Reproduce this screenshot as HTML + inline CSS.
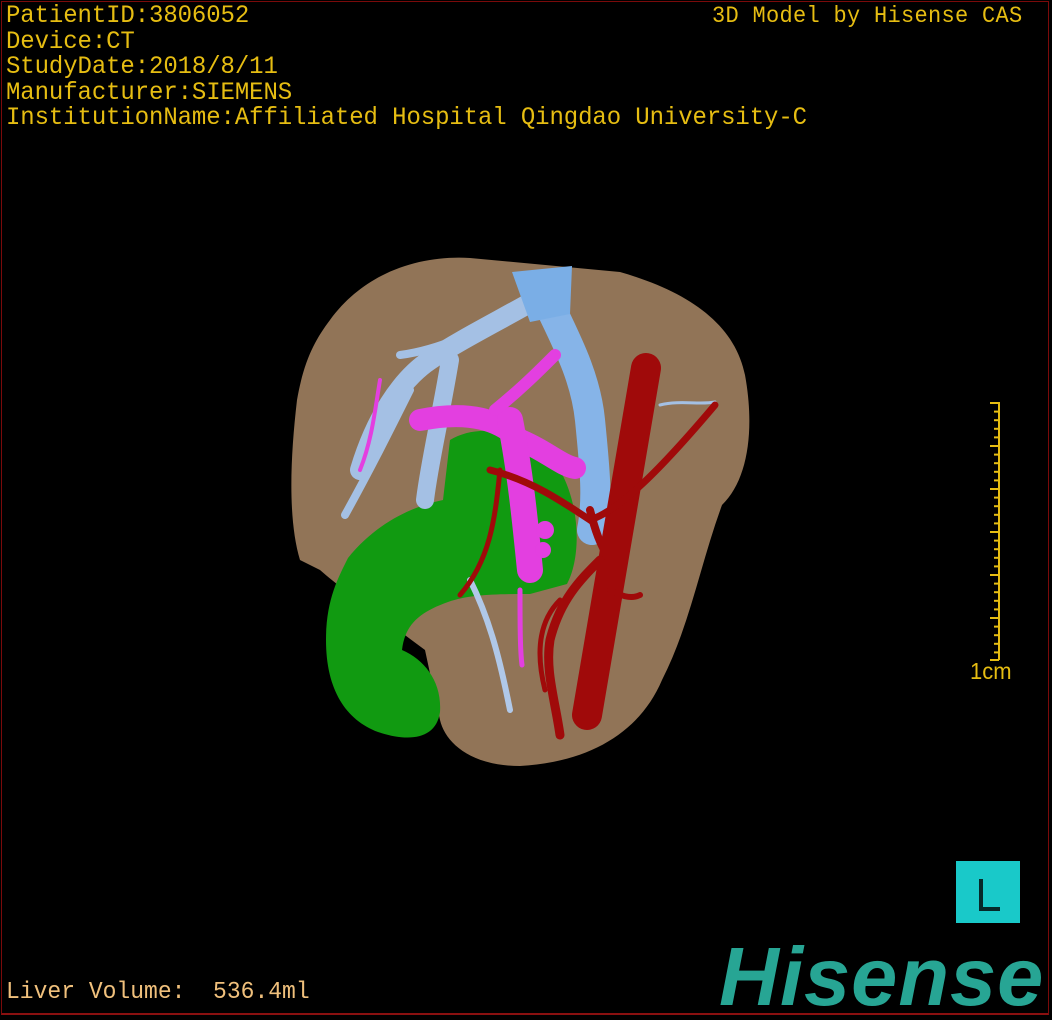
<!DOCTYPE html>
<html><head><meta charset="utf-8"><style>
html,body{margin:0;padding:0;background:#000;}
#c{position:relative;width:1052px;height:1020px;overflow:hidden;background:#000;font-family:"Liberation Mono","DejaVu Sans Mono",monospace;}
.t{position:absolute;color:#e6bd12;font-size:24px;line-height:25px;white-space:pre;letter-spacing:-0.1px;transform:scaleY(1.05);transform-origin:0 0;}
#frame{position:absolute;left:1px;top:1px;width:1046px;height:1011px;border:1px solid #7a0a0a;border-bottom:2px solid #8a1010;}
#hs{position:absolute;left:719px;top:932px;font-family:"Liberation Sans",sans-serif;font-weight:bold;font-style:italic;font-size:83px;color:#27a594;letter-spacing:1px;line-height:90px;white-space:nowrap;}
#L{position:absolute;left:956px;top:861px;width:64px;height:62px;background:#19c9c9;}
</style></head><body><div id="c">
<svg width="1052" height="1020" style="position:absolute;left:0;top:0">
<path d="M330,320 C365,272 420,255 470,258 L620,272 C690,292 735,325 745,375 C755,430 748,480 722,505 C700,565 690,625 662,680 C640,732 590,762 520,766 C470,766 445,742 440,720 L425,650 C385,620 345,592 320,570 L300,560 C288,520 290,460 297,400 C304,360 315,340 330,320 Z" fill="#917457"/>
<path d="M450,440 C480,422 528,430 560,470 C582,510 580,560 567,584 L530,594 C500,594 470,594 448,602 C420,612 405,624 402,650 C425,660 442,682 440,712 C436,740 408,742 378,732 C346,720 326,690 326,640 C326,600 338,578 348,558 C372,528 405,508 443,500 Z" fill="#119a11"/>
<g fill="none" stroke="#86b4e8" stroke-linecap="round">
<path d="M540,285 C560,330 585,370 590,420 C595,470 598,500 592,530" stroke-width="30"/>
<path d="M535,300 C500,320 460,340 430,360 C400,380 375,420 360,470" stroke-width="20" stroke="#a4c0e4"/>
<path d="M520,310 C480,330 440,350 400,355" stroke-width="8" stroke="#a4c0e4"/>
<path d="M450,360 C440,420 430,460 425,500" stroke-width="18" stroke="#a4c0e4"/>
<path d="M410,390 C390,430 370,470 345,515" stroke-width="8" stroke="#a4c0e4"/>
<path d="M470,580 C490,620 500,660 510,710" stroke-width="6" stroke="#b0c8e8"/>
<path d="M660,405 C680,400 700,405 715,402" stroke-width="3" stroke="#a4c0e4"/>
</g>
<path d="M512,272 L572,266 L570,314 L530,322 Z" fill="#7aaee6"/>
<g fill="none" stroke="#e33fe0" stroke-linecap="round">
<path d="M420,420 C470,410 500,420 520,440 C545,450 560,465 575,468" stroke-width="22"/>
<path d="M510,420 C520,470 525,520 530,570" stroke-width="26"/>
<path d="M495,410 C520,390 540,370 555,355" stroke-width="12"/>
<path d="M380,380 C375,410 372,440 360,470" stroke-width="4"/>
<path d="M520,590 C520,620 520,650 522,665" stroke-width="5"/>
</g>
<circle cx="545" cy="530" r="9" fill="#e33fe0"/><circle cx="543" cy="550" r="8" fill="#e33fe0"/>
<g fill="none" stroke="#a00a0a" stroke-linecap="round">
<path d="M646,368 L587,715" stroke-width="30"/>
<path d="M490,470 C530,480 560,500 590,520 C620,510 660,470 715,405" stroke-width="7"/>
<path d="M500,470 C495,520 490,560 460,595" stroke-width="5"/>
<path d="M600,560 C580,580 560,600 550,640 C545,670 555,700 560,735" stroke-width="9"/>
<path d="M560,600 C540,620 535,650 545,690" stroke-width="5"/>
<path d="M610,590 C620,595 630,600 640,595" stroke-width="6"/>
<path d="M590,510 C595,530 600,545 610,560" stroke-width="8"/>
</g>
</svg>
<div id="frame"></div>
<div class="t" style="left:6px;top:3px">PatientID:3806052</div>
<div class="t" style="left:6px;top:29px">Device:CT</div>
<div class="t" style="left:6px;top:54px">StudyDate:2018/8/11</div>
<div class="t" style="left:6px;top:80px">Manufacturer:SIEMENS</div>
<div class="t" style="left:6px;top:105px">InstitutionName:Affiliated Hospital Qingdao University-C</div>
<div class="t" style="left:712px;top:3px;font-size:22px;letter-spacing:0.3px">3D Model by Hisense CAS</div>
<div class="t" style="left:6px;top:979px;color:#f0c07c;font-size:23px;letter-spacing:0">Liver Volume:  536.4ml</div>
<div class="t" style="left:970px;top:658px;font-family:'Liberation Sans',sans-serif;font-size:22px;letter-spacing:0">1cm</div>
<svg width="40" height="270" style="position:absolute;left:980px;top:398px">
<line x1="19" y1="4" x2="19" y2="262" stroke="#e6bd12" stroke-width="2"/>
<g stroke="#e6bd12" stroke-width="2">
<line x1="10" y1="5" x2="19" y2="5"/><line x1="14" y1="13.6" x2="19" y2="13.6"/><line x1="14" y1="22.2" x2="19" y2="22.2"/><line x1="14" y1="30.8" x2="19" y2="30.8"/><line x1="14" y1="39.4" x2="19" y2="39.4"/><line x1="10" y1="48" x2="19" y2="48"/><line x1="14" y1="56.6" x2="19" y2="56.6"/><line x1="14" y1="65.2" x2="19" y2="65.2"/><line x1="14" y1="73.8" x2="19" y2="73.8"/><line x1="14" y1="82.4" x2="19" y2="82.4"/><line x1="10" y1="91" x2="19" y2="91"/><line x1="14" y1="99.6" x2="19" y2="99.6"/><line x1="14" y1="108.2" x2="19" y2="108.2"/><line x1="14" y1="116.8" x2="19" y2="116.8"/><line x1="14" y1="125.4" x2="19" y2="125.4"/><line x1="10" y1="134" x2="19" y2="134"/><line x1="14" y1="142.6" x2="19" y2="142.6"/><line x1="14" y1="151.2" x2="19" y2="151.2"/><line x1="14" y1="159.8" x2="19" y2="159.8"/><line x1="14" y1="168.4" x2="19" y2="168.4"/><line x1="10" y1="177" x2="19" y2="177"/><line x1="14" y1="185.6" x2="19" y2="185.6"/><line x1="14" y1="194.2" x2="19" y2="194.2"/><line x1="14" y1="202.8" x2="19" y2="202.8"/><line x1="14" y1="211.4" x2="19" y2="211.4"/><line x1="10" y1="220" x2="19" y2="220"/><line x1="14" y1="228.6" x2="19" y2="228.6"/><line x1="14" y1="237.2" x2="19" y2="237.2"/><line x1="14" y1="245.8" x2="19" y2="245.8"/><line x1="14" y1="254.4" x2="19" y2="254.4"/><line x1="10" y1="262" x2="19" y2="262"/>
</g></svg>
<div id="L"><svg width="64" height="62"><path d="M25,18 V48 H44" fill="none" stroke="#062a2a" stroke-width="4"/></svg></div>
<div id="hs">Hisense</div>
</div></body></html>
